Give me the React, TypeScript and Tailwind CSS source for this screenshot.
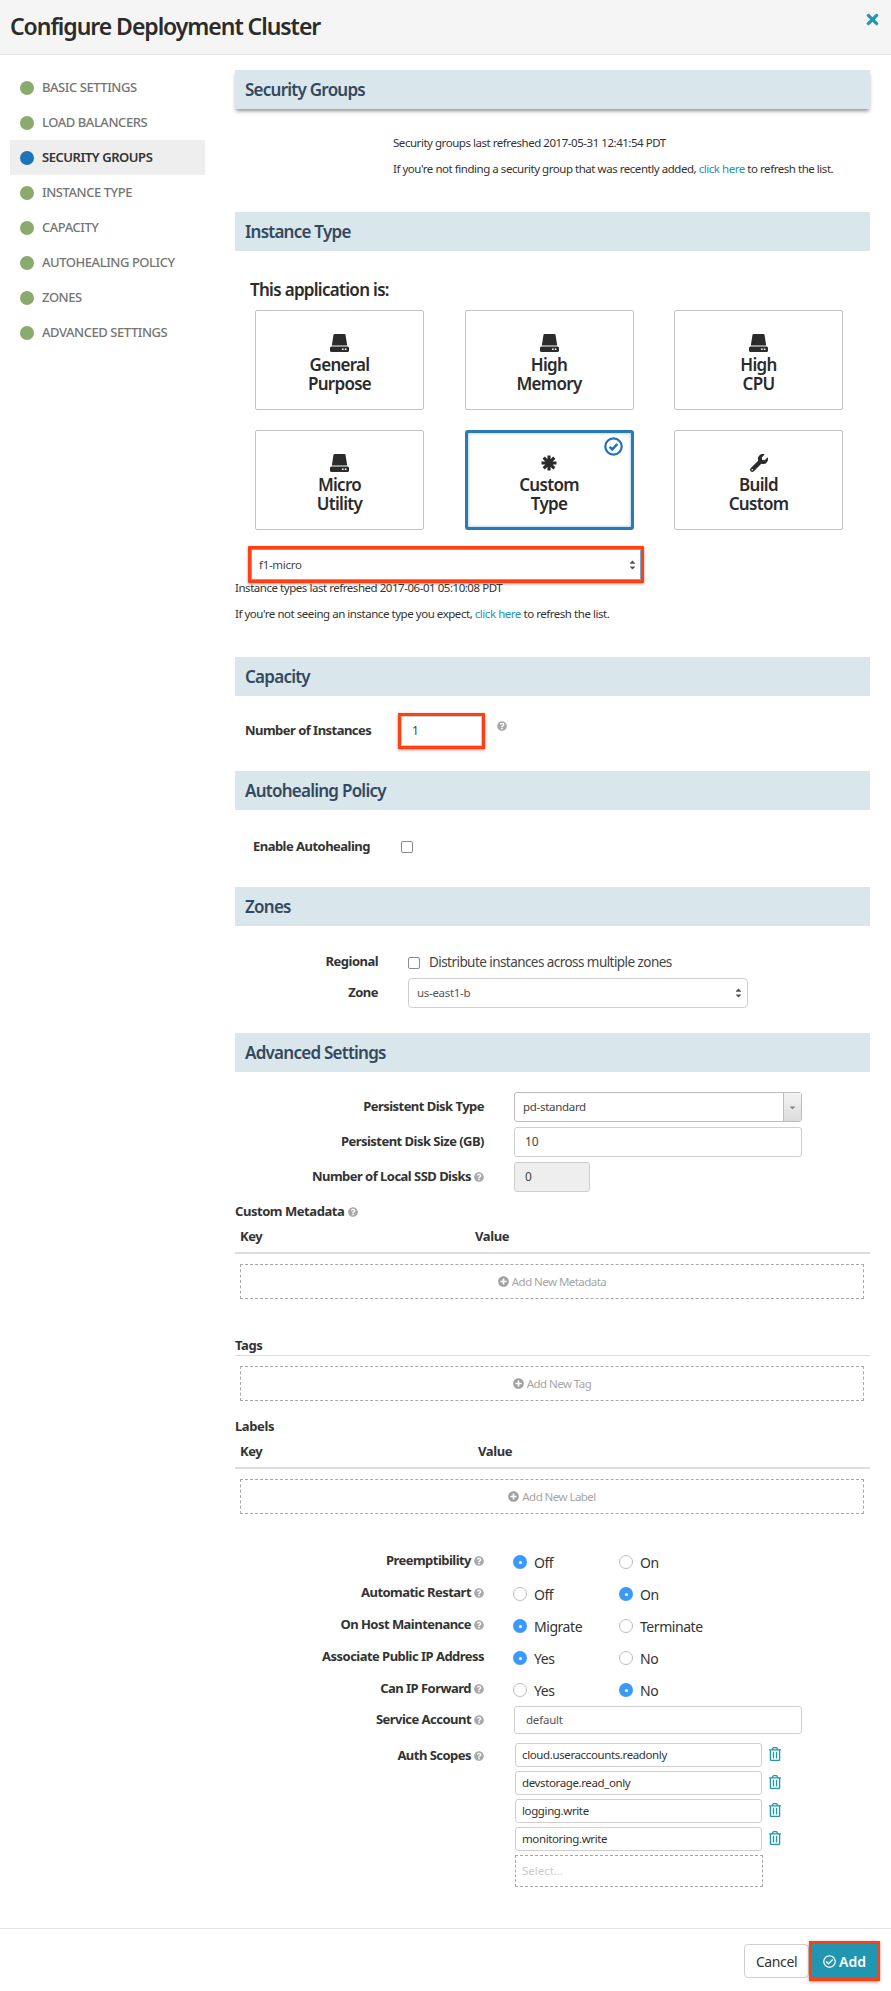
import React from "react";
import { FaQuestionCircle, FaPlusCircle, FaTimes, FaWrench, FaRegCheckCircle, FaRegTrashAlt, FaCaretDown } from "react-icons/fa";

const nav = ["Basic Settings", "Load Balancers", "Security Groups", "Instance Type", "Capacity", "Autohealing Policy", "Zones", "Advanced Settings"];

function Hdd() {
  return (
    <svg width="19" height="18" viewBox="0 0 19 18" className="block" fill="#2b2b2b">
      <path d="M4.5 0 H14.5 Q15.3 0 15.5 0.8 L17.2 11.5 H1.8 L3.5 0.8 Q3.7 0 4.5 0 Z" />
      <path fillRule="evenodd" d="M1.5 12.5 H17.5 Q19 12.5 19 14 V16.5 Q19 18 17.5 18 H1.5 Q0 18 0 16.5 V14 Q0 12.5 1.5 12.5 Z M12 14.5 H13.6 V16 H12 Z M14.8 14.5 H16.4 V16 H14.8 Z" />
    </svg>
  );
}

function Star() {
  return (
    <svg width="16" height="16" viewBox="0 0 16 16" className="block" stroke="#2b2b2b" strokeWidth="3.1">
      <path d="M8 0.5 V15.5 M0.5 8 H15.5 M2.7 2.7 L13.3 13.3 M13.3 2.7 L2.7 13.3" />
    </svg>
  );
}

function CheckBadge() {
  return (
    <svg width="19" height="19" viewBox="0 0 19 19" className="absolute top-[4px] right-[8px]" fill="none" stroke="#1f73b7">
      <circle cx="9.5" cy="9.5" r="8.2" strokeWidth="2.2" />
      <path d="M5.6 9.8 L8.3 12.4 L13.3 7" strokeWidth="2.5" />
    </svg>
  );
}

function Section({ title, shadow, className }: { title: string; shadow?: boolean; className?: string }) {
  return (
    <div className={`h-[39px] bg-[#d9e6eb] flex items-center pl-[10px] pt-[1px] text-[17px] font-semibold text-[#34495e] tracking-[-0.75px] ${shadow ? "shadow-[0_3px_4px_-1px_rgba(0,0,0,0.45)]" : ""} ${className ?? ""}`}>
      {title}
    </div>
  );
}

function Help({ className }: { className?: string }) {
  return <FaQuestionCircle className={`text-[#a8a8a8] text-[10px] shrink-0 ${className ?? ""}`} />;
}

function Card({ title, title2, icon, selected }: { title: string; title2: string; icon: React.ReactNode; selected?: boolean }) {
  const cls = selected
    ? "border-[3px] border-[#2a7ab8] rounded-[3px] pt-[21px] shadow-[inset_0_0_3px_#7fb2d9]"
    : "border border-[#c4c4c4] rounded-[2px] pt-[23px]";
  return (
    <div className={`relative w-[169px] h-[100px] bg-white flex flex-col items-center text-[17px] leading-[19px] font-semibold text-[#2b2b2b] tracking-[-0.7px] ${cls}`}>
      {selected && <CheckBadge />}
      <div className="h-[18px] flex items-center justify-center mb-[3px]">{icon}</div>
      <div>{title}</div>
      <div>{title2}</div>
    </div>
  );
}

function Radio({ on, label }: { on?: boolean; label: string }) {
  return (
    <div className="flex items-center w-[106px]">
      {on ? (
        <span className="w-[14px] h-[14px] rounded-full bg-[#3b99fc] flex items-center justify-center shrink-0">
          <span className="w-[3px] h-[3px] rounded-full bg-white" />
        </span>
      ) : (
        <span className="w-[14px] h-[14px] rounded-full bg-white border border-[#bdbdbd] shrink-0" />
      )}
      <span className="ml-[7px] text-[14px] text-[#333] tracking-[-0.45px]">{label}</span>
    </div>
  );
}

function RadioRow({ label, help = true, a, b, aOn }: { label: string; help?: boolean; a: string; b: string; aOn: boolean }) {
  return (
    <div className="h-[32px] flex items-center">
      <div className="w-[249px] pb-[2px] flex items-center justify-end text-[13px] font-bold text-[#333] tracking-[-0.53px]">
        {label}
        {help && <Help className="ml-[3px]" />}
      </div>
      <div className="ml-[29px] flex">
        <Radio on={aOn} label={a} />
        <Radio on={!aOn} label={b} />
      </div>
    </div>
  );
}

function Dashed({ label, className }: { label: string; className?: string }) {
  return (
    <div className={`ml-[5px] mr-[6px] h-[35px] border border-dashed border-[#a8a8a8] rounded-[1px] flex items-center justify-center text-[11.5px] text-[#a6a6a6] tracking-[-0.55px] ${className ?? ""}`}>
      <FaPlusCircle className="text-[11px] text-[#a0a0a0] mr-[3px]" />
      {label}
    </div>
  );
}

function Scope({ label }: { label: string }) {
  return (
    <div className="flex items-center h-[24px] mb-[4px]">
      <div className="w-[247px] h-[24px] border border-[#cfcfcf] rounded-[3px] flex items-center pl-[6px] text-[11.5px] tracking-[-0.38px] text-[#333]">{label}</div>
      <FaRegTrashAlt className="ml-[6px] -mt-[3px] text-[14px] text-[#2196b0]" />
    </div>
  );
}

function UpDown() {
  return (
    <span className="flex flex-col text-[#555]">
      <FaCaretDown className="text-[9px] -mb-[4px] rotate-180" />
      <FaCaretDown className="text-[9px]" />
    </span>
  );
}

export default function App() {
  return (
    <div className="w-[891px] h-[1991px] bg-white flex flex-col text-[#333]" style={{ fontFamily: '"Noto Sans", sans-serif' }}>
      <header className="h-[55px] shrink-0 bg-[#f5f5f5] border-b border-[#e3e3e3] flex justify-between pl-[10px] pr-[10px]">
        <h1 className="text-[23px] leading-[52px] font-semibold text-[#2b2b2b] tracking-[-1.05px]">Configure Deployment Cluster</h1>
        <FaTimes className="mt-[11px] text-[17px] text-[#2196b0]" />
      </header>

      <div className="flex-1 flex min-h-0">
        <nav className="w-[235px] shrink-0 pt-[15px] pl-[10px]">
          <div className="w-[195px] flex flex-col">
            {nav.map((n, i) => (
              <div key={n} className={`h-[35px] flex items-center pl-[10px] text-[13px] uppercase tracking-[-0.45px] ${i === 2 ? "bg-[#eeeeee] text-[#333] font-semibold" : "text-[#757575] font-medium"}`}>
                <span className={`w-[14px] h-[14px] rounded-full mr-[8px] shrink-0 ${i === 2 ? "bg-[#1f73b7]" : "bg-[#8bab6e]"}`} />
                {n}
              </div>
            ))}
          </div>
        </nav>

        <main className="w-[635px] shrink-0 pt-[15px]">
          <Section title="Security Groups" shadow />
          <div className="pl-[158px] pt-[21px] text-[11.5px] text-[#333] tracking-[-0.46px] leading-[26px] h-[103px]">
            <p>Security groups last refreshed 2017-05-31 12:41:54 PDT</p>
            <p>If you're not finding a security group that was recently added, <span className="text-[#2196b0]">click here</span> to refresh the list.</p>
          </div>

          <Section title="Instance Type" />
          <h2 className="ml-[15px] mt-[27px] h-[32px] text-[17px] leading-[24px] font-semibold text-[#2b2b2b] tracking-[-0.7px]">This application is:</h2>
          <div className="ml-[20px] grid grid-cols-[169px_169px_169px] gap-x-[40.5px] gap-y-[20px]">
            <Card title="General" title2="Purpose" icon={<Hdd />} />
            <Card title="High" title2="Memory" icon={<Hdd />} />
            <Card title="High" title2="CPU" icon={<Hdd />} />
            <Card title="Micro" title2="Utility" icon={<Hdd />} />
            <Card title="Custom" title2="Type" icon={<Star />} selected />
            <Card title="Build" title2="Custom" icon={<FaWrench className="text-[18px]" />} />
          </div>
          <div className="ml-[13px] mt-[16px] w-[396px] h-[37px] border-[3px] border-[#ff3f14] shadow-[0_1px_3px_rgba(0,0,0,0.4),inset_0_0_0_1px_#7ba7c9] rounded-[1px] bg-white flex items-center justify-between pl-[8px] pr-[4px] text-[11.5px] text-[#444] tracking-[-0.3px]">
            f1-micro
            <UpDown />
          </div>
          <div className="text-[11.5px] text-[#333] tracking-[-0.46px] leading-[26px] h-[82px] -mt-[8px]">
            <p>Instance types last refreshed 2017-06-01 05:10:08 PDT</p>
            <p>If you're not seeing an instance type you expect, <span className="text-[#2196b0]">click here</span> to refresh the list.</p>
          </div>

          <Section title="Capacity" />
          <div className="h-[75px] flex items-start pl-[10px] pt-[17px]">
            <span className="w-[153px] h-[36px] flex items-center text-[13px] font-bold tracking-[-0.53px]">Number of Instances</span>
            <div className="w-[87px] h-[36px] border-[3px] border-[#ff3f14] shadow-[0_1px_3px_rgba(0,0,0,0.4),inset_0_0_0_1px_#cccccc] flex items-center pl-[11px] text-[12px] text-[#444]">1</div>
            <Help className="ml-[12px] mt-[8px]" />
          </div>

          <Section title="Autohealing Policy" />
          <div className="h-[77px] flex items-center pl-[18px] pb-[3px]">
            <span className="w-[148px] text-[13px] font-bold tracking-[-0.53px]">Enable Autohealing</span>
            <span className="w-[12px] h-[12px] rounded-[2px] border border-[#8a8a8a] bg-white" />
          </div>

          <Section title="Zones" />
          <div className="h-[107px] pt-[22px]">
            <div className="flex items-center h-[29px]">
              <span className="w-[143px] text-right text-[13px] font-bold tracking-[-0.53px] pb-[2px]">Regional</span>
              <span className="ml-[30px] w-[12px] h-[12px] rounded-[2px] border border-[#8a8a8a] bg-white" />
              <span className="ml-[9px] text-[13.5px] tracking-[-0.56px] text-[#444]">Distribute instances across multiple zones</span>
            </div>
            <div className="flex items-center h-[30px] mt-[1px]">
              <span className="w-[143px] text-right text-[13px] font-bold tracking-[-0.53px]">Zone</span>
              <div className="ml-[30px] w-[340px] h-[30px] border border-[#cfcfcf] rounded-[4px] flex items-center justify-between pl-[8px] pr-[4px] text-[11.5px] text-[#555] tracking-[-0.3px]">
                us-east1-b
                <UpDown />
              </div>
            </div>
          </div>

          <Section title="Advanced Settings" />
          <div className="pt-[20px] flex flex-col gap-[5px]">
            <div className="flex items-center h-[30px]">
              <span className="w-[249px] text-right text-[13px] font-bold tracking-[-0.53px]">Persistent Disk Type</span>
              <div className="ml-[30px] w-[288px] h-[30px] border border-[#bdbdbd] rounded-[3px] flex items-stretch text-[11.5px] text-[#444]">
                <span className="flex-1 flex items-center pl-[8px] tracking-[-0.3px]">pd-standard</span>
                <span className="w-[18px] border-l border-[#bdbdbd] bg-gradient-to-b from-[#f4f4f4] to-[#dcdcdc] flex items-center justify-center text-[#8a8a8a]">
                  <FaCaretDown className="text-[9px]" />
                </span>
              </div>
            </div>
            <div className="flex items-center h-[30px]">
              <span className="w-[249px] text-right text-[13px] font-bold tracking-[-0.53px]">Persistent Disk Size (GB)</span>
              <div className="ml-[30px] w-[288px] h-[30px] border border-[#cfcfcf] rounded-[3px] flex items-center pl-[10px] text-[12px] text-[#444]">10</div>
            </div>
            <div className="flex items-center h-[30px]">
              <span className="w-[249px] flex items-center justify-end text-[13px] font-bold tracking-[-0.53px]">Number of Local SSD Disks<Help className="ml-[3px]" /></span>
              <div className="ml-[30px] w-[76px] h-[30px] border border-[#cfcfcf] rounded-[3px] bg-[#eeeeee] flex items-center pl-[10px] text-[12px] text-[#444]">0</div>
            </div>
          </div>

          <div className="mt-[10px] h-[20px] flex items-center text-[13px] font-bold tracking-[-0.45px]">Custom Metadata<Help className="ml-[4px]" /></div>
          <div className="h-[32px] flex items-center border-b-2 border-[#dddddd] text-[13px] font-bold tracking-[-0.4px] pl-[5px]">
            <span className="w-[235px]">Key</span><span>Value</span>
          </div>
          <Dashed label="Add New Metadata" className="mt-[10px]" />

          <div className="mt-[37px] h-[20px] flex items-center border-b border-[#dddddd] text-[13px] font-bold tracking-[-0.4px]">Tags</div>
          <Dashed label="Add New Tag" className="mt-[10px]" />

          <div className="mt-[16px] h-[20px] flex items-center text-[13px] font-bold tracking-[-0.4px]">Labels</div>
          <div className="h-[32px] flex items-center border-b-2 border-[#dddddd] text-[13px] font-bold tracking-[-0.4px] pl-[5px]">
            <span className="w-[238px]">Key</span><span>Value</span>
          </div>
          <Dashed label="Add New Label" className="mt-[10px]" />

          <div className="mt-[32px]">
            <RadioRow label="Preemptibility" a="Off" b="On" aOn />
            <RadioRow label="Automatic Restart" a="Off" b="On" aOn={false} />
            <RadioRow label="On Host Maintenance" a="Migrate" b="Terminate" aOn />
            <RadioRow label="Associate Public IP Address" help={false} a="Yes" b="No" aOn />
            <RadioRow label="Can IP Forward" a="Yes" b="No" aOn={false} />
          </div>
          <div className="flex items-center h-[28px]">
            <span className="w-[249px] flex items-center justify-end text-[13px] font-bold tracking-[-0.53px]">Service Account<Help className="ml-[3px]" /></span>
            <div className="ml-[30px] w-[288px] h-[28px] border border-[#cfcfcf] rounded-[3px] flex items-center pl-[11px] text-[11.5px] tracking-[-0.2px] text-[#555]">default</div>
          </div>
          <div className="flex items-start mt-[9px]">
            <span className="w-[249px] mt-[3px] flex items-center justify-end text-[13px] font-bold tracking-[-0.53px]">Auth Scopes<Help className="ml-[3px]" /></span>
            <div className="ml-[31px]">
              <Scope label="cloud.useraccounts.readonly" />
              <Scope label="devstorage.read_only" />
              <Scope label="logging.write" />
              <Scope label="monitoring.write" />
              <div className="w-[248px] h-[32px] mt-[1px] border border-dashed border-[#a8a8a8] flex items-center pl-[6px] text-[11.5px] text-[#cccccc]">Select...</div>
            </div>
          </div>
        </main>
      </div>

      <footer className="h-[63px] shrink-0 border-t border-[#e3e3e3] flex items-start justify-end pr-[11px] pt-[12px]">
        <button className="mt-[3px] w-[65px] h-[34px] border border-[#cfcfcf] rounded-[4px] bg-white text-[14px] text-[#333] tracking-[-0.4px]">Cancel</button>
        <button className="w-[71px] h-[40px] border-[3px] border-[#ff3f14] shadow-[0_1px_3px_rgba(0,0,0,0.4)] bg-[#2196b0] flex items-center justify-center gap-[3px] text-[14px] font-semibold text-white">
          <FaRegCheckCircle className="text-[13px]" />Add
        </button>
      </footer>
    </div>
  );
}
